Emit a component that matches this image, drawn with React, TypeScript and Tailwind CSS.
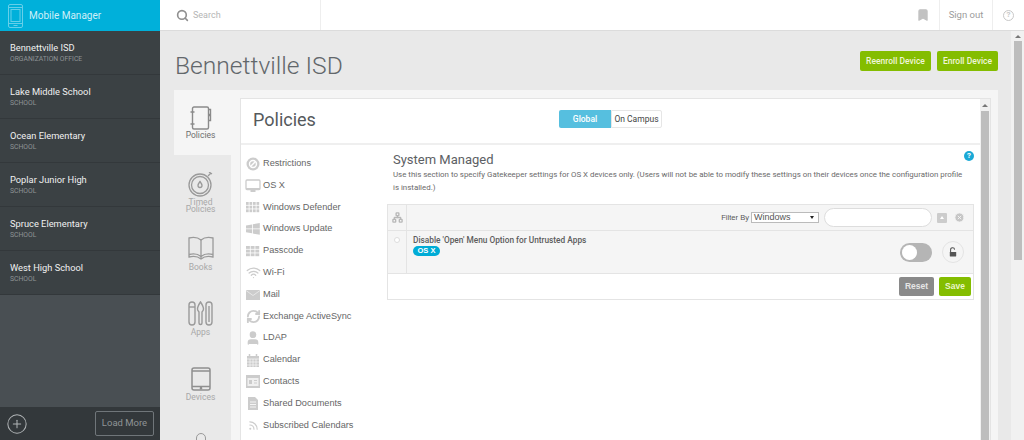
import React from "react";
import { Search, Bookmark, CirclePlus, Wifi, User, Rss, RefreshCw, CircleX, Network } from "lucide-react";

const schools = [
  ["Bennettville ISD", "ORGANIZATION OFFICE"],
  ["Lake Middle School", "SCHOOL"],
  ["Ocean Elementary", "SCHOOL"],
  ["Poplar Junior High", "SCHOOL"],
  ["Spruce Elementary", "SCHOOL"],
  ["West High School", "SCHOOL"],
];

const G = "#cccccc";

function Grid({ rows, cols }: { rows: number; cols: number }) {
  const cells = [];
  const w = 14 / cols;
  const h = 11 / rows;
  for (let r = 0; r < rows; r++)
    for (let c = 0; c < cols; c++)
      cells.push(<rect key={r + "-" + c} x={1 + c * w} y={3 + r * h} width={w - 0.8} height={h - 0.8} fill={G} />);
  return <svg width="16" height="16" viewBox="0 0 16 16">{cells}</svg>;
}

function Win() {
  return (
    <svg width="16" height="16" viewBox="0 0 16 16">
      <path d="M1 4.500l6-1v4H1zM7.800 3.300l7-1.200v5.400h-7zM1 8.300h6v4l-6-1zM7.800 8.300h7v5.500l-7-1.200z" fill={G} />
    </svg>
  );
}
function BanI() {
  return (
    <svg width="14" height="14" viewBox="0 0 14 14">
      <circle cx="7" cy="7" r="6.500" fill={G} />
      <circle cx="7" cy="7" r="3.500" fill="none" stroke="#fff" strokeWidth="1.400" />
      <path d="M4.500 9.500l5-5" stroke="#fff" strokeWidth="1.400" />
    </svg>
  );
}
function MonitorI() {
  return (
    <svg width="16" height="15" viewBox="0 0 16 15">
      <rect x="1" y="2" width="14" height="9.500" rx="1" fill="none" stroke={G} strokeWidth="1.300" />
      <rect x="1" y="10" width="14" height="2" fill={G} />
      <path d="M5.500 14h5v-2h-5z" fill={G} />
    </svg>
  );
}
function MailI() {
  return (
    <svg width="16" height="12" viewBox="0 0 16 12">
      <rect x="1" y="1" width="14" height="10" fill={G} />
      <path d="M1 1.500l7 5 7-5" fill="none" stroke="#eee" strokeWidth=".8" />
    </svg>
  );
}
function CalI() {
  return (
    <svg width="14" height="15" viewBox="0 0 14 15">
      <path d="M1 3h12v11H1z" fill={G} />
      <path d="M3.500 1v3M10.500 1v3" stroke={G} strokeWidth="1.500" />
      <path d="M1 6h12M1 9h12M1 12h12M4 6v8M7 6v8M10 6v8" stroke="#fff" strokeWidth=".6" />
    </svg>
  );
}
function ContactI() {
  return (
    <svg width="16" height="15" viewBox="0 0 16 15">
      <rect x="1" y="1" width="14" height="13" fill={G} />
      <rect x="2.500" y="4" width="11" height="8" fill="#fff" opacity=".7" />
      <rect x="4" y="6" width="3" height="4" fill={G} />
      <path d="M9 6.500h3M9 9h3" stroke={G} strokeWidth="1" />
    </svg>
  );
}
function DocI() {
  return (
    <svg width="12" height="15" viewBox="0 0 12 15">
      <path d="M1 1h7l3 3v10H1z" fill={G} />
      <path d="M3 6h6M3 8.500h6M3 11h6" stroke="#fff" strokeWidth=".8" />
    </svg>
  );
}

const policyItems: [string, React.ReactNode][] = [
  ["Restrictions", <BanI />],
  ["OS X", <MonitorI />],
  ["Windows Defender", <Grid rows={3} cols={4} />],
  ["Windows Update", <Win />],
  ["Passcode", <Grid rows={3} cols={3} />],
  ["Wi-Fi", <Wifi size={15} color={G} strokeWidth={2} />],
  ["Mail", <MailI />],
  ["Exchange ActiveSync", <RefreshCw size={15} color={G} strokeWidth={3} />],
  ["LDAP", <User size={16} color={G} fill={G} />],
  ["Calendar", <CalI />],
  ["Contacts", <ContactI />],
  ["Shared Documents", <DocI />],
  ["Subscribed Calendars", <Rss size={11} color={G} strokeWidth={2.500} />],
];

function PoliciesIcon() {
  return (
    <svg width="22" height="24" viewBox="0 0 22 24" fill="none" stroke="#8a8a8a" strokeWidth="1.400">
      <rect x="2.500" y="1" width="16" height="22" rx="1.500" />
      <path d="M0.500 6h4M0.500 18h4" />
      <path d="M18.500 3.500h2v5h-2M18.500 9.500h2v5h-2" />
    </svg>
  );
}
function TimedIcon() {
  return (
    <svg width="26" height="25" viewBox="0 0 26 25" fill="none" stroke="#9a9a9a" strokeWidth="1.300">
      <circle cx="12" cy="13" r="11" />
      <circle cx="12" cy="13" r="8.500" />
      <path d="M12 9.500c-1.500 2-2 3-2 4a2 2 0 0 0 4 0c0-1-.5-2-2-4z" />
      <path d="M20 4l3-3M21 0l3 2" />
    </svg>
  );
}
function BooksIcon() {
  return (
    <svg width="26" height="25" viewBox="0 0 26 25" fill="none" stroke="#9a9a9a" strokeWidth="1.300">
      <path d="M13 4C10 1.500 5 1 1 2v19c4-1 9-.5 12 2 3-2.500 8-3 12-2V2c-4-1-9-.5-12 2z" />
      <path d="M13 4v19" />
      <path d="M1 18.500c4-1 9-.5 12 2 3-2.500 8-3 12-2" />
    </svg>
  );
}
function AppsIcon() {
  return (
    <svg width="25" height="25" viewBox="0 0 25 25" fill="none" stroke="#9a9a9a" strokeWidth="1.400">
      <rect x="1" y="1" width="6" height="23" rx="3" />
      <path d="M1 6h6" />
      <path d="M12.500 1c-2 3-3 5-3 7 0 2 1.500 2.500 1.500 3v11c0 2 3 2 3 0V11c0-.5 1.500-1 1.500-3 0-2-1-4-3-7z" />
      <rect x="18" y="1" width="6" height="23" rx="3" />
      <path d="M21 5v16" />
    </svg>
  );
}
function DevicesIcon() {
  return (
    <svg width="20" height="24" viewBox="0 0 20 24" fill="none" stroke="#8f8f8f" strokeWidth="1.500">
      <rect x="1" y="1" width="18" height="22" rx="2" />
      <path d="M1 4h18M1 19.500h18" />
      <circle cx="10" cy="21.200" r=".6" fill="#8f8f8f" />
    </svg>
  );
}

function PhoneIcon() {
  return (
    <svg width="15" height="24" viewBox="0 0 15 24" fill="none" stroke="#66cfe9" strokeWidth="1">
      <rect x=".5" y=".5" width="14" height="23" rx="1.500" />
      <path d="M.5 3.500h14M.5 19.500h14M5.500 21.500h4" />
      <rect x="3" y="5.500" width="9" height="12" />
    </svg>
  );
}

function OpenLock() {
  return (
    <svg width="8" height="10" viewBox="0 0 10 12">
      <path d="M2 6V3.500a2.500 2.500 0 0 1 5-.5" fill="none" stroke="#555" strokeWidth="1.300" />
      <rect x="1" y="6" width="8" height="5.500" rx=".5" fill="#555" />
    </svg>
  );
}

function Tab({ label, children, className }: { label: string; children: React.ReactNode; className: string }) {
  return (
    <div className={"flex flex-col items-center h-[65px] shrink-0 pr-[4px] " + className}>
      {children}
      <div className="text-[8.500px] leading-[7px] text-center whitespace-pre-line">{label}</div>
    </div>
  );
}

function ScrollArrow() {
  return <div className="w-0 h-0 border-x-[3px] border-x-transparent border-b-[3px] border-b-[#777]" />;
}

export default function App() {
  return (
    <div className="w-[1024px] h-[440px] overflow-hidden flex flex-col bg-[#e9e9e9] font-['Roboto',sans-serif]">
      <header className="h-[31px] shrink-0 flex bg-white border-b border-[#dcdcdc]">
        <div className="w-[160px] h-[31px] bg-[#00b0da] flex items-center pl-[8px] gap-[6px] text-[#cfeff8] text-[10px]">
          <PhoneIcon />
          <span>Mobile Manager</span>
        </div>
        <div className="w-[161px] pt-[1px] border-r border-[#eeeeee] flex items-center pl-[16px] gap-[4px] text-[#b5b5b5] text-[9px]">
          <Search size={13} color="#8f8f8f" strokeWidth={3} />
          <span>Search</span>
        </div>
        <div className="flex-1 flex items-center justify-end pr-[9px]">
          <Bookmark size={14} color="#c2c2c2" fill="#c2c2c2" />
        </div>
        <div className="w-[54px] pt-[1px] border-x border-[#eeeeee] flex items-center justify-center text-[9.500px] text-[#9c9c9c]">Sign out</div>
        <div className="w-[31px] flex items-center justify-center">
          <div className="w-[11px] h-[11px] rounded-full border-[1.500px] border-[#c8c8c8] text-[8px] font-bold leading-[8px] text-center text-[#c8c8c8]">?</div>
        </div>
      </header>

      <div className="flex flex-1 min-h-0">
        <aside className="w-[160px] shrink-0 flex flex-col bg-[#494f53]">
          <div className="bg-[#3b4144]">
            {schools.map(([name, sub]) => (
              <div key={name} className="h-[44px] pl-[10px] pt-[11px] border-b border-[#33383b]">
                <div className="text-[9.300px] leading-[11px] text-[#f0f0f0]">{name}</div>
                <div className="text-[6.800px] leading-[10px] mt-[0.500px] text-[#8f9496]">{sub}</div>
              </div>
            ))}
          </div>
          <div className="flex-1" />
          <div className="h-[33px] bg-[#33383b] flex items-center justify-between pl-[6px] pr-[6px]">
            <CirclePlus size={22} color="#b0b4b6" strokeWidth={1.100} />
            <div className="w-[59px] h-[25px] border border-[#70767a] rounded-[2px] flex items-center justify-center text-[9.500px] text-[#8f9496]">Load More</div>
          </div>
        </aside>

        <main className="flex-1 min-w-0 pl-[14px] pr-[13px] flex flex-col">
          <div className="h-[59px] shrink-0 flex items-start justify-between">
            <h1 className="text-[24.600px] leading-[30px] mt-[20px] ml-[1px] font-light text-[#62676b]">Bennettville ISD</h1>
            <div className="flex gap-[6px] mt-[20px]">
              <div className="w-[71px] h-[20px] bg-[#84bd00] rounded-[2px] flex items-center justify-center text-[8.500px] font-medium text-[#f0f6da]">Reenroll Device</div>
              <div className="w-[61px] h-[20px] bg-[#84bd00] rounded-[2px] flex items-center justify-center text-[8.500px] font-medium text-[#f0f6da]">Enroll Device</div>
            </div>
          </div>

          <div className="flex flex-1 min-h-0 bg-[#f5f5f5] pr-[7px]">
            <nav className="w-[57px] shrink-0 bg-[#e9e9e9] flex flex-col text-[#a8a8a8] overflow-hidden">
              <Tab label="Policies" className="bg-[#f5f5f5] pt-[16px] gap-[2px] text-[#6e6e6e]"><PoliciesIcon /></Tab>
              <Tab label={"Timed\nPolicies"} className="pt-[17px] gap-[2px]"><TimedIcon /></Tab>
              <Tab label="Books" className="pt-[16px] gap-[3px]"><BooksIcon /></Tab>
              <Tab label="Apps" className="pt-[16px] gap-[3px]"><AppsIcon /></Tab>
              <Tab label="Devices" className="pt-[17px] gap-[3px]"><DevicesIcon /></Tab>
              <div className="flex justify-center pt-[18px] pr-[4px]">
                <div className="w-[10px] h-[14px] rounded-t-full border-[1.500px] border-[#9a9a9a]" />
              </div>
            </nav>

            <div className="w-[9px] shrink-0" />

            <section className="flex-1 min-w-0 mt-[8px] bg-white border-t border-x border-[#e4e4e4] flex">
              <div className="flex-1 min-w-0 flex flex-col">
                <div className="h-[46px] shrink-0 pb-[3px] border-b-[2px] border-[#efefef] flex items-center relative">
                  <h2 className="ml-[12px] text-[18px] text-[#55595c]">Policies</h2>
                  <div className="absolute left-[318px] top-[11px] flex h-[18px] text-[8.500px]">
                    <div className="w-[52px] bg-[#56bfdf] rounded-l-[2px] flex items-center justify-center text-white font-medium">Global</div>
                    <div className="w-[51px] border border-[#e6e6e6] rounded-r-[2px] flex items-center justify-center text-[#444]">On Campus</div>
                  </div>
                </div>

                <div className="flex flex-1 min-h-0">
                  <ul className="w-[146px] shrink-0 pt-[8px] pl-[4px] font-['Liberation_Sans',sans-serif]">
                    {policyItems.map(([label, icon]) => (
                      <li key={label} className="h-[21.800px] flex items-center gap-[2px] text-[9.200px] text-[#666]">
                        <span className="w-[16px] h-[16px] flex items-center justify-center">{icon}</span>
                        <span>{label}</span>
                      </li>
                    ))}
                  </ul>

                  <div className="flex-1 min-w-0 pr-[6px] relative">
                    <div className="absolute right-[6px] top-[6px] w-[10px] h-[10px] rounded-full bg-[#1aa9d6] text-white text-[8px] font-bold leading-[10px] text-center">?</div>
                    <h3 className="text-[13px] leading-[16px] mt-[7px] ml-[6px] text-[#5c6064]">System Managed</h3>
                    <p className="text-[7.900px] leading-[13px] ml-[6px] pr-[6px] text-[#6a6a6a]">
                      Use this section to specify Gatekeeper settings for OS X devices only. (Users will not be able to modify these settings on their devices once the configuration profile is installed.)
                    </p>
                    <div className="mt-[10px] border border-[#e4e4e4] font-['Liberation_Sans',sans-serif]">
                      <div className="h-[26px] bg-[#f5f5f5] border-b border-[#e4e4e4] flex items-center">
                        <div className="w-[19px] h-full border-r border-[#e4e4e4] flex items-center justify-center">
                          <Network size={11} color="#b8b8b8" strokeWidth={3} />
                        </div>
                        <div className="flex-1 flex items-center justify-end pr-[8px]">
                          <span className="text-[7.600px] font-medium text-[#555] mr-[2px]">Filter By</span>
                          <div className="w-[68px] h-[11px] bg-white border border-[#bbb] flex items-center justify-between px-[2px] text-[9px] text-[#555]">
                            <span>Windows</span>
                            <span className="w-0 h-0 border-x-[2.500px] border-x-transparent border-t-[3px] border-t-[#222] mr-[2px]" />
                          </div>
                          <div className="w-[108px] h-[19px] bg-white border border-[#ddd] rounded-full ml-[5px] mr-[5px]" />
                          <div className="w-[10px] h-[10px] bg-[#ccc] rounded-[1px] mr-[7px] flex items-center justify-center">
                            <div className="w-0 h-0 border-x-[2px] border-x-transparent border-b-[3px] border-b-white" />
                          </div>
                          <CircleX size={11} color="#f5f5f5" fill="#c6c6c6" strokeWidth={2} />
                        </div>
                      </div>
                      <div className="h-[43px] bg-[#f5f5f5] border-b border-[#e4e4e4] flex">
                        <div className="w-[19px] border-r border-[#e4e4e4] flex justify-center pt-[6px]">
                          <div className="w-[6px] h-[6px] rounded-full border border-[#ddd] bg-white" />
                        </div>
                        <div className="flex-1 pl-[6px] pt-[4px]">
                          <div className="text-[8.300px] leading-[11px] font-['Roboto',sans-serif] font-medium text-[#5c5c5c]">Disable 'Open' Menu Option for Untrusted Apps</div>
                          <div className="w-[27px] h-[10px] rounded-full bg-[#00acd6] text-white text-[7.500px] leading-[10px] font-bold text-center">OS X</div>
                        </div>
                        <div className="flex items-center pr-[9px] gap-[10px]">
                          <div className="w-[32px] h-[19px] rounded-full bg-[#b5b5b5] p-[2px]">
                            <div className="w-[15px] h-[15px] rounded-full bg-white" />
                          </div>
                          <div className="w-[22px] h-[22px] rounded-full border border-[#e4e4e4] flex items-center justify-center">
                            <OpenLock />
                          </div>
                        </div>
                      </div>
                      <div className="h-[25px] bg-white flex items-center justify-end pr-[2px] gap-[5px] text-[8.500px] font-bold">
                        <div className="w-[35px] h-[19px] bg-[#8a8a8a] rounded-[2px] flex items-center justify-center text-[#e6e6e6]">Reset</div>
                        <div className="w-[32px] h-[19px] bg-[#84bd00] rounded-[2px] flex items-center justify-center text-[#eaf5cc]">Save</div>
                      </div>
                    </div>
                  </div>
                </div>
              </div>
              <div className="w-[10px] shrink-0 bg-[#f1f1f1] flex flex-col items-center">
                <div className="h-[12px] flex items-center"><ScrollArrow /></div>
                <div className="w-[8px] flex-1 bg-[#bdbdbd]" />
              </div>
            </section>
          </div>
        </main>

        <div className="w-[13px] shrink-0 bg-[#f1f1f1] flex flex-col items-center">
          <div className="h-[10px] flex items-center"><ScrollArrow /></div>
          <div className="w-[8px] h-[219px] bg-[#bdbdbd]" />
        </div>
      </div>
    </div>
  );
}
